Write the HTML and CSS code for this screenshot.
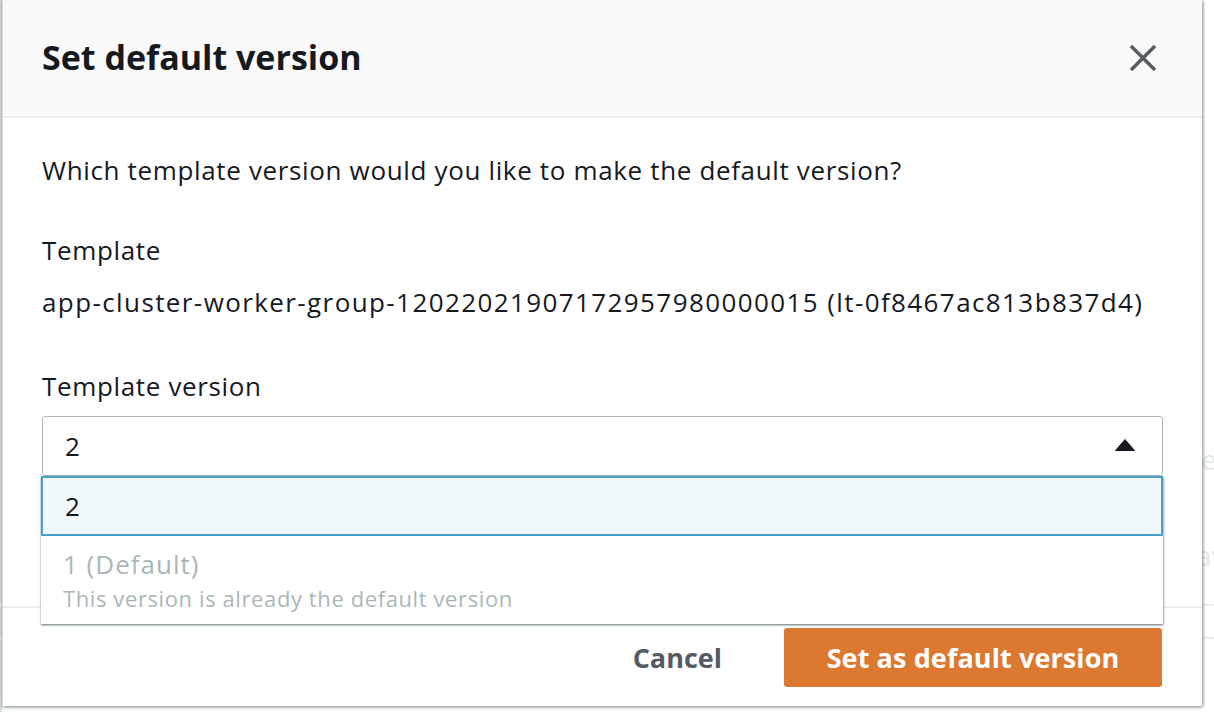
FILE: index.html
```html
<!DOCTYPE html>
<html lang="en">
<head>
<meta charset="utf-8">
<title>Set default version</title>
<link rel="stylesheet" href="styles.css">
</head>
<body>
<div class="page">
  <div class="page-line page-line-a">en</div>
  <div class="page-line page-line-b">av</div>
  <div class="page-rule page-rule-a"></div>
  <div class="page-rule page-rule-b"></div>
</div>

<div class="modal" role="dialog" aria-labelledby="modal-title">
  <header class="modal-header">
    <h2 id="modal-title" class="modal-title">Set default version</h2>
    <button class="close-btn" aria-label="Close">
      <svg width="28" height="28" viewBox="0 0 28 28" aria-hidden="true">
        <path d="M2 2 L26 26 M26 2 L2 26" stroke="#545b64" stroke-width="3.4" fill="none"/>
      </svg>
    </button>
  </header>

  <div class="modal-body">
    <p class="question">Which template version would you like to make the default version?</p>
    <div class="field-label">Template</div>
    <div class="field-value">app-cluster-worker-group-12022021907172957980000015 (lt-0f8467ac813b837d4)</div>
    <div class="field-label field-label-version">Template version</div>
    <div class="select-wrap">
      <div class="select">
        <span class="select-value">2</span>
        <svg class="caret" width="20" height="12" viewBox="0 0 20 12" aria-hidden="true">
          <path d="M10 0.5 L19.5 11.5 L0.5 11.5 Z" fill="#16191f" stroke="#16191f" stroke-linejoin="round" stroke-width="1"/>
        </svg>
      </div>
      <ul class="dropdown">
        <li class="option option-selected">2</li>
        <li class="option option-disabled">
          <span class="option-title">1 (Default)</span>
          <span class="option-desc">This version is already the default version</span>
        </li>
      </ul>
    </div>
  </div>

  <footer class="modal-footer">
    <button class="btn btn-link">Cancel</button>
    <button class="btn btn-primary">Set as default version</button>
  </footer>
</div>
</body>
</html>
```

FILE: styles.css
```css
* { box-sizing: border-box; }

html, body {
  margin: 0;
  padding: 0;
  width: 1214px;
  height: 712px;
  overflow: hidden;
  background: #ffffff;
  font-family: "Open Sans", "Noto Sans", Arial, sans-serif;
  color: #16191f;
}

.page {
  position: relative;
  width: 1214px;
  height: 712px;
  overflow: hidden;
  background: #ffffff;
}

.page-line {
  position: absolute;
  left: 1201px;
  font-size: 28px;
  line-height: 34px;
  color: #e6e9e9;
  white-space: nowrap;
}
.page-line-a { top: 442px; }
.page-line-b { top: 538px; left: 1196px; }

.page-rule {
  position: absolute;
  left: 0;
  right: 0;
  height: 2px;
  background: #eceeee;
}
.page-rule-a { top: 604px; }
.page-rule-b { top: 637px; }

.page::before {
  content: "";
  position: absolute;
  left: 0;
  top: 0;
  bottom: 0;
  width: 2px;
  background: #d5dbdb;
}

.modal {
  position: absolute;
  left: 2px;
  top: 0;
  width: 1200px;
  height: 706px;
  background: #ffffff;
  border-left: 1px solid #d5dbdb;
  box-shadow: 1px 1px 3px rgba(0, 28, 36, 0.45), 0 1px 4px rgba(0, 28, 36, 0.15);
  display: flex;
  flex-direction: column;
}

.modal-header {
  height: 118px;
  background: #fafafa;
  border-bottom: 2px solid #eaeded;
  display: flex;
  align-items: center;
  justify-content: space-between;
  padding: 0 45px 0 39px;
}

.modal-title {
  margin: 0;
  font-size: 34px;
  font-weight: 700;
  letter-spacing: 0;
  color: #16191f;
  padding-bottom: 2px;
}

.close-btn {
  border: 0;
  background: transparent;
  padding: 0;
  width: 28px;
  height: 28px;
  display: flex;
}

.modal-body {
  flex: 1;
  padding: 35px 40px 0 39px;
  font-size: 26px;
  line-height: 34px;
  letter-spacing: 0.65px;
}

.question {
  margin: 0 0 46px 0;
}

.field-label {
  margin-bottom: 18px;
}

.field-value {
  margin-bottom: 50px;
  white-space: nowrap;
  letter-spacing: 1.4px;
}

.field-label-version {
  margin-bottom: 13px;
}

.select-wrap {
  position: relative;
  width: 1121px;
}

.select {
  height: 60px;
  border: 1px solid #aab7b8;
  border-radius: 3px;
  display: flex;
  align-items: center;
  justify-content: space-between;
  padding: 0 27px 0 22px;
}

.select-value {
  font-size: 26px;
}

.caret {
  display: block;
  margin-top: -2px;
}

.dropdown {
  position: absolute;
  left: -1px;
  top: 60px;
  width: 1122px;
  margin: 0;
  padding: 0;
  list-style: none;
  background: #ffffff;
  box-shadow: 0 1px 2px rgba(0, 28, 36, 0.5), 1px 1px 2px rgba(0, 28, 36, 0.2);
  z-index: 5;
}

.option {
  padding: 0 22px;
}

.option-selected {
  height: 60px;
  background: #f1f8fc;
  border: 2px solid #4aa0cb;
  display: flex;
  align-items: center;
  padding-left: 22px;
}

.option-disabled {
  height: 88px;
  display: flex;
  flex-direction: column;
  padding-top: 12px;
  color: #aab7b8;
}

.option-title {
  font-size: 26px;
  line-height: 32px;
  letter-spacing: 1px;
}

.option-desc {
  font-size: 22px;
  line-height: 30px;
  margin-top: 3px;
  letter-spacing: 0.6px;
}

.modal-footer {
  height: 100px;
  border-top: 2px solid #eaeded;
  display: flex;
  align-items: center;
  justify-content: flex-end;
  padding: 0 40px 0 0;
  gap: 62px;
}

.btn {
  font-family: "Open Sans", "Noto Sans", Arial, sans-serif;
  font-size: 27px;
  font-weight: 700;
  border: 0;
  cursor: pointer;
}

.btn-link {
  background: transparent;
  color: #545b64;
  padding: 0;
  letter-spacing: 0;
}

.btn-primary {
  width: 378px;
  height: 59px;
  background: #dd7831;
  color: #ffffff;
  border-radius: 3px;
  letter-spacing: 0.1px;
}
```
